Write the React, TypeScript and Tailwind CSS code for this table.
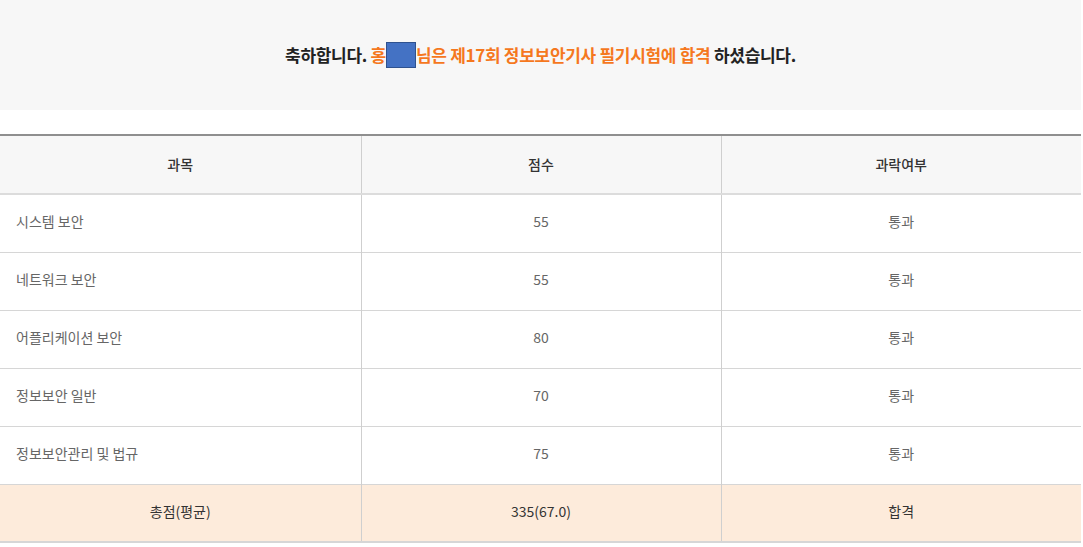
import React from "react";

const rows = [
  { subject: "시스템 보안", score: 55, result: "통과" },
  { subject: "네트워크 보안", score: 55, result: "통과" },
  { subject: "어플리케이션 보안", score: 80, result: "통과" },
  { subject: "정보보안 일반", score: 70, result: "통과" },
  { subject: "정보보안관리 및 법규", score: 75, result: "통과" },
];

export default function App() {
  return (
    <div
      className="w-[1081px] bg-white"
      style={{ fontFamily: '"Noto Sans CJK KR", "Noto Sans", sans-serif' }}
    >
      {/* 합격 안내 */}
      <div className="h-[110px] bg-[#f7f7f7] flex items-center justify-center">
        <p className="text-[17px] font-bold tracking-[-0.3px] text-[#222] flex items-center">
          <span>축하합니다.&nbsp;</span>
          <span className="text-[#f5781e]">홍</span>
          <span className="inline-block w-[30px] h-[26px] bg-[#4472c4] border border-[#2f528f]" />
          <span className="text-[#f5781e]">님은 제17회 정보보안기사 필기시험에 합격</span>
          <span>&nbsp;하셨습니다.</span>
        </p>
      </div>

      {/* 점수표 */}
      <table className="mt-[24px] w-full border-collapse table-fixed text-[14px]">
        <colgroup>
          <col className="w-[361px]" />
          <col className="w-[360px]" />
          <col />
        </colgroup>
        <thead>
          <tr className="h-[59px] bg-[#f7f7f7] border-t-2 border-[#8f8f8f] border-b-2 border-b-[#dcdcdc]">
            <th className="font-medium text-[#333] border-r border-[#cfcfcf]">과목</th>
            <th className="font-medium text-[#333] border-r border-[#cfcfcf]">점수</th>
            <th className="font-medium text-[#333]">과락여부</th>
          </tr>
        </thead>
        <tbody>
          {rows.map((r) => (
            <tr key={r.subject} className="h-[58px] border-b border-[#d6d6d6] text-[#666]">
              <td className="pl-4 pb-[3px] border-r border-[#cfcfcf]">{r.subject}</td>
              <td className="text-center pb-[3px] border-r border-[#cfcfcf]">{r.score}</td>
              <td className="text-center pb-[3px]">{r.result}</td>
            </tr>
          ))}
          <tr className="h-[58px] bg-[#fdebdb] border-b-2 border-[#d6d6d6] text-[#333]">
            <td className="text-center pb-[2px] border-r border-[#cfcfcf]">총점(평균)</td>
            <td className="text-center pb-[2px] border-r border-[#cfcfcf]">335(67.0)</td>
            <td className="text-center pb-[2px]">합격</td>
          </tr>
        </tbody>
      </table>
    </div>
  );
}
